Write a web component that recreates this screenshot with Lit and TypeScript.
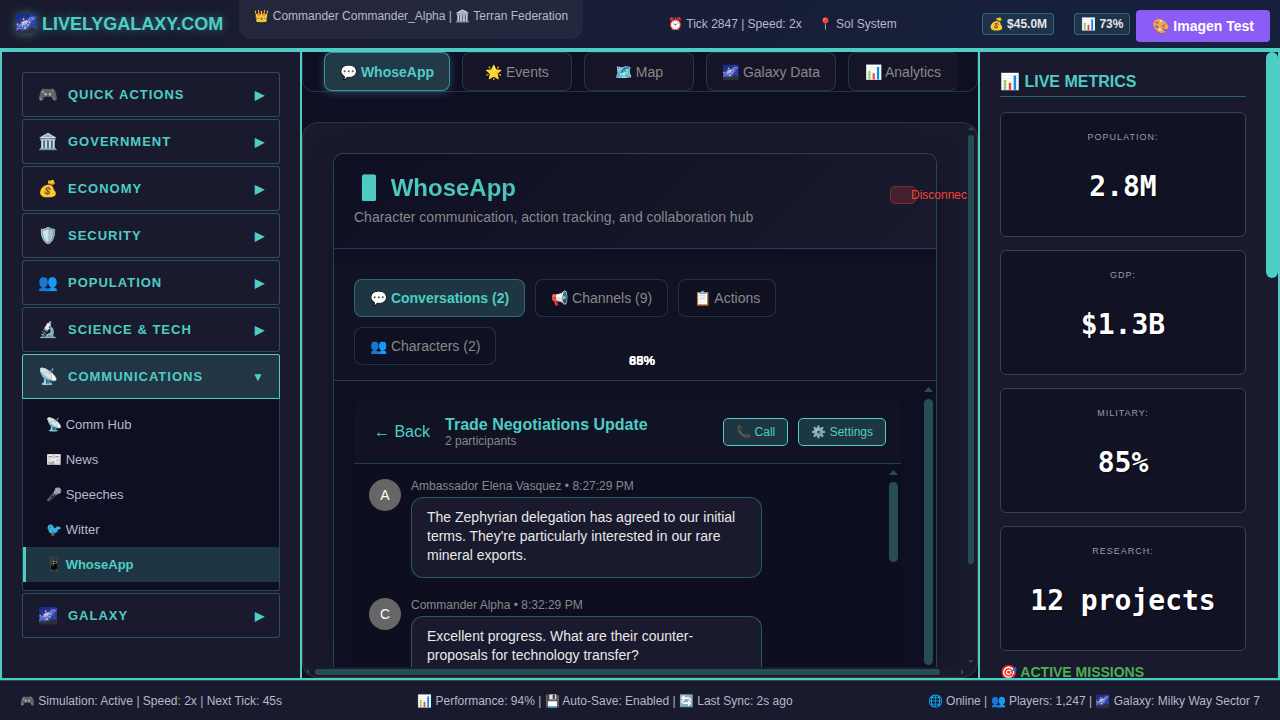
import { LitElement, html, css } from "lit";
import { customElement, state } from "lit/decorators.js";
import { classMap } from "lit/directives/class-map.js";

interface NavSection {
  icon: string;
  label: string;
  items?: { icon: string; label: string }[];
}

const SECTIONS: NavSection[] = [
  { icon: "🎮", label: "Quick Actions" },
  { icon: "🏛️", label: "Government" },
  { icon: "💰", label: "Economy" },
  { icon: "🛡️", label: "Security" },
  { icon: "👥", label: "Population" },
  { icon: "🔬", label: "Science & Tech" },
  {
    icon: "📡",
    label: "Communications",
    items: [
      { icon: "📡", label: "Comm Hub" },
      { icon: "📰", label: "News" },
      { icon: "🎤", label: "Speeches" },
      { icon: "🐦", label: "Witter" },
      { icon: "📱", label: "WhoseApp" },
    ],
  },
  { icon: "🌌", label: "Galaxy" },
];

const METRICS = [
  ["Population:", "2.8M"],
  ["GDP:", "$1.3B"],
  ["Military:", "85%"],
  ["Research:", "12 projects"],
];

const MESSAGES = [
  {
    initial: "A",
    meta: "Ambassador Elena Vasquez • 8:27:29 PM",
    text: "The Zephyrian delegation has agreed to our initial terms. They're particularly interested in our rare mineral exports.",
  },
  {
    initial: "C",
    meta: "Commander Alpha • 8:32:29 PM",
    text: "Excellent progress. What are their counter-proposals for technology transfer?",
  },
];

@customElement("galaxy-nav")
class GalaxyNav extends LitElement {
  @state() private open = "Communications";
  @state() private page = "WhoseApp";

  static styles = css`
    :host {
      display: block;
      overflow: hidden;
      background: #1a1a2e;
    }
    nav {
      display: flex;
      flex-direction: column;
      gap: 2px;
      padding: 20px;
    }
    button {
      font: inherit;
      cursor: pointer;
    }
    .section {
      display: flex;
      align-items: center;
      gap: 10px;
      width: 100%;
      height: 45px;
      padding: 0 15px;
      border: 1px solid rgba(78, 205, 196, 0.3);
      border-radius: 3px;
      background: #1a1a2e;
      color: #4ecdc4;
      font-size: 13px;
      font-weight: bold;
      letter-spacing: 1px;
      text-transform: uppercase;
      text-align: left;
    }
    .section.open {
      background: #223545;
      border-color: #4ecdc4;
      border-radius: 2px 2px 0 0;
    }
    .icon {
      width: 20px;
      font-size: 16px;
      letter-spacing: 0;
    }
    .name {
      flex: 1;
    }
    .arrow {
      font-size: 12px;
      letter-spacing: 0;
    }
    .sub {
      margin: 0;
      padding: 8px 0;
      list-style: none;
      background: #0f0f23;
      border: 1px solid rgba(78, 205, 196, 0.3);
      border-top: none;
      border-radius: 0 0 3px 3px;
    }
    .link {
      display: flex;
      align-items: center;
      height: 35px;
      padding-left: 20px;
      border-left: 3px solid transparent;
      color: #b8b8c8;
      font-size: 13px;
      text-decoration: none;
    }
    .link.current {
      background: #1e3643;
      border-color: #4ecdc4;
      color: #4ecdc4;
      font-weight: bold;
    }
  `;

  render() {
    return html`<nav aria-label="Departments">
      ${SECTIONS.map((s) => {
        const open = s.label === this.open;
        return html`<div>
          <button
            class=${classMap({ section: true, open })}
            aria-expanded=${open}
            @click=${() => (this.open = open ? "" : s.label)}
          >
            <span class="icon">${s.icon}</span><span class="name">${s.label}</span
            ><span class="arrow">${open ? "▼" : "▶"}</span>
          </button>
          ${open && s.items
            ? html`<ul class="sub">
                ${s.items.map(
                  (i) => html`<li>
                    <a
                      href="#"
                      class=${classMap({ link: true, current: i.label === this.page })}
                      @click=${(e: Event) => {
                        e.preventDefault();
                        this.page = i.label;
                      }}
                      >${i.icon} ${i.label}</a
                    >
                  </li>`
                )}
              </ul>`
            : ""}
        </div>`;
      })}
    </nav>`;
  }
}

@customElement("live-metrics")
class LiveMetrics extends LitElement {
  static styles = css`
    :host {
      display: grid;
      grid-template-columns: minmax(0, 1fr) 12px;
      overflow: hidden;
      background: #1a1a2e;
    }
    .body {
      min-height: 0;
      padding: 20px;
    }
    h2 {
      margin: 0 0 15px;
      padding-bottom: 5px;
      border-bottom: 1px solid rgba(78, 205, 196, 0.4);
      color: #4ecdc4;
      font-size: 16px;
      line-height: 19px;
    }
    .cards {
      display: grid;
      gap: 13px;
      margin: 0;
    }
    .card {
      display: flex;
      flex-direction: column;
      align-items: center;
      gap: 28px;
      padding: 18px 12px 33px;
      border: 1px solid #3d3d4d;
      border-radius: 6px;
      background: #121225;
    }
    dt {
      color: #9a9aaa;
      font-size: 9px;
      line-height: 12px;
      letter-spacing: 1px;
      text-transform: uppercase;
    }
    dd {
      margin: 0;
      color: #fff;
      font: bold 28px/32px "DejaVu Sans Mono", monospace;
      text-shadow: 1px 1px 2px rgba(0, 0, 0, 0.5);
    }
    h3 {
      margin: 13px 0 0;
      color: #4caf50;
      font-size: 14px;
      line-height: 16px;
    }
    .thumb {
      height: 226px;
      border-radius: 6px;
      background: #4ecdc4;
    }
  `;

  render() {
    return html`<div class="body">
        <h2>📊 LIVE METRICS</h2>
        <dl class="cards">
          ${METRICS.map(([k, v]) => html`<div class="card"><dt>${k}</dt><dd>${v}</dd></div>`)}
        </dl>
        <h3>🎯 ACTIVE MISSIONS</h3>
      </div>
      <div class="thumb"></div>`;
  }
}

@customElement("whose-app")
class WhoseApp extends LitElement {
  @state() private tab = 0;

  static styles = css`
    :host {
      display: block;
      min-height: 0;
    }
    .frame {
      display: grid;
      grid-template-columns: minmax(0, 1fr) 10px;
      grid-template-rows: minmax(0, 1fr) 10px;
      box-sizing: border-box;
      height: 100%;
      overflow: hidden;
      border: 1px solid rgba(255, 215, 0, 0.15);
      border-radius: 16px;
      background: #1a1a2e;
    }
    .view {
      display: flex;
      overflow: hidden;
      padding: 30px 30px 0;
    }
    .panel {
      display: flex;
      flex-direction: column;
      flex: 1;
      min-width: 0;
      border: 1px solid rgba(78, 205, 196, 0.3);
      border-bottom: none;
      border-radius: 10px 10px 0 0;
      background: #0f0f23;
      box-shadow: 0 8px 32px rgba(0, 0, 0, 0.3);
    }
    button {
      font: inherit;
      cursor: pointer;
    }
    .hero {
      display: flex;
      justify-content: space-between;
      padding: 17px 20px 22px;
      border-bottom: 1px solid rgba(78, 205, 196, 0.25);
      border-radius: 10px 10px 0 0;
      background: linear-gradient(135deg, #0f0f23, #1a1a2e);
    }
    h1 {
      margin: 0;
      background: linear-gradient(45deg, #4ecdc4, #45b7aa);
      background-clip: text;
      -webkit-background-clip: text;
      color: transparent;
      font-size: 24px;
      line-height: 34px;
    }
    .sub {
      margin: 4px 0 0;
      color: #888;
      font-size: 14px;
      line-height: 17px;
    }
    .status {
      box-sizing: border-box;
      width: 26px;
      height: 18px;
      margin-top: 15px;
      padding-left: 20px;
      border: 1px solid rgba(244, 67, 54, 0.3);
      border-radius: 5px;
      background: rgba(244, 67, 54, 0.2);
      color: #f44336;
      font-size: 12px;
      line-height: 16px;
      white-space: nowrap;
    }
    .tabs {
      position: relative;
      display: flex;
      flex-wrap: wrap;
      gap: 10px;
      margin-top: 15px;
      padding: 15px 150px 15px 20px;
      border-bottom: 1px solid rgba(78, 205, 196, 0.25);
      background: #121225;
    }
    .tab {
      height: 38px;
      padding: 0 15px;
      border: 1px solid rgba(78, 205, 196, 0.2);
      border-radius: 8px;
      background: #0f1022;
      color: #888;
      font-size: 14px;
    }
    .tab.active {
      background: #1e3643;
      border-color: rgba(78, 205, 196, 0.35);
      color: #4ecdc4;
      font-weight: bold;
    }
    .gauge {
      position: absolute;
      left: 308px;
      bottom: 12px;
      width: 0;
      display: flex;
      justify-content: center;
      color: #fff;
      font-size: 13px;
      font-weight: bold;
      line-height: 14px;
    }
    .scroller {
      display: grid;
      grid-template-columns: minmax(0, 1fr) 15px;
      flex: 1;
      min-height: 0;
    }
    .pane {
      display: flex;
      overflow: hidden;
      padding: 20px 20px 0;
    }
    .chat {
      display: flex;
      flex-direction: column;
      flex: 1;
      min-width: 0;
      border-radius: 8px 8px 0 0;
      background: #0e0e21;
    }
    .chat-head {
      display: flex;
      align-items: center;
      gap: 10px;
      height: 62px;
      flex: none;
      padding: 0 15px 0 20px;
      border-bottom: 1px solid rgba(78, 205, 196, 0.25);
      border-radius: 8px 8px 0 0;
      background: #121225;
    }
    .back {
      padding: 0;
      margin-right: 5px;
      border: none;
      background: none;
      color: #4ecdc4;
      font-size: 16px;
    }
    .topic {
      flex: 1;
    }
    h2 {
      margin: 0;
      color: #4ecdc4;
      font-size: 16px;
      line-height: 18px;
    }
    .topic p {
      margin: 0;
      color: #888;
      font-size: 12px;
      line-height: 14px;
    }
    .act {
      height: 28px;
      padding: 0 12px;
      border: 1px solid #4ecdc4;
      border-radius: 5px;
      background: #1e3643;
      color: #4ecdc4;
      font-size: 12px;
    }
    .log {
      display: grid;
      grid-template-columns: minmax(0, 1fr) 15px;
      min-height: 0;
      flex: 1;
    }
    .messages {
      display: flex;
      flex-direction: column;
      gap: 20px;
      overflow: hidden;
      padding: 15px;
    }
    .message {
      display: flex;
      flex: none;
      gap: 10px;
    }
    .avatar {
      display: flex;
      align-items: center;
      justify-content: center;
      flex: none;
      width: 32px;
      height: 32px;
      border-radius: 50%;
      background: #666;
      color: #fff;
      font-size: 14px;
    }
    .content {
      width: 70%;
    }
    .meta {
      margin-bottom: 4px;
      color: #888;
      font-size: 12px;
      line-height: 14px;
    }
    .bubble {
      padding: 10px 15px 12px;
      border: 1px solid rgba(78, 205, 196, 0.35);
      border-radius: 12px;
      background: #1a1a2e;
      color: #e8e8e8;
      font-size: 14px;
      line-height: 19px;
    }
    .rail {
      display: flex;
      flex-direction: column;
      align-items: center;
      gap: 7px;
      padding-top: 6px;
    }
    .rail.slim {
      align-items: flex-start;
      gap: 5px;
      padding: 4px 1px;
    }
    .up,
    .down {
      width: 9px;
      height: 5px;
      background: #264d56;
      clip-path: polygon(50% 0, 100% 100%, 0 100%);
    }
    .slim .up,
    .slim .down {
      width: 6px;
      height: 3px;
    }
    .down {
      margin-top: auto;
      transform: rotate(180deg);
    }
    .bar {
      width: 9px;
      border-radius: 5px;
      background: #264d56;
    }
    .bar.whole {
      flex: 1;
      margin-bottom: 2px;
    }
    .bar.part {
      height: 80px;
    }
    .slim .bar {
      width: 6px;
      height: 80%;
    }
    .cross {
      display: flex;
      align-items: center;
      gap: 6px;
      padding: 0 3px;
    }
    .cross .tip {
      width: 3px;
      height: 6px;
      background: #264d56;
      clip-path: polygon(0 50%, 100% 0, 100% 100%);
    }
    .cross .tip:last-child {
      margin-left: auto;
      transform: rotate(180deg);
    }
    .cross .bar {
      width: 95%;
      height: 6px;
    }
  `;

  render() {
    const tabs = ["💬 Conversations (2)", "📢 Channels (9)", "📋 Actions", "👥 Characters (2)"];
    return html`<div class="frame">
      <div class="view">
        <section class="panel">
          <header class="hero">
            <div>
              <h1>📱 WhoseApp</h1>
              <p class="sub">Character communication, action tracking, and collaboration hub</p>
            </div>
            <div class="status">Disconnected</div>
          </header>
          <div class="tabs">
            ${tabs.map(
              (t, i) =>
                html`<button
                  class=${classMap({ tab: true, active: i === this.tab })}
                  @click=${() => (this.tab = i)}
                >
                  ${t}
                </button>`
            )}
            <div class="gauge">85%</div>
            <div class="gauge">68%</div>
          </div>
          <div class="scroller">
            <div class="pane">
              <div class="chat">
                <div class="chat-head">
                  <button class="back">← Back</button>
                  <div class="topic">
                    <h2>Trade Negotiations Update</h2>
                    <p>2 participants</p>
                  </div>
                  <button class="act">📞 Call</button>
                  <button class="act">⚙️ Settings</button>
                </div>
                <div class="log">
                  <div class="messages">
                    ${MESSAGES.map(
                      (m) => html`<article class="message">
                        <div class="avatar">${m.initial}</div>
                        <div class="content">
                          <div class="meta">${m.meta}</div>
                          <div class="bubble">${m.text}</div>
                        </div>
                      </article>`
                    )}
                  </div>
                  <div class="rail"><i class="up"></i><i class="bar part"></i></div>
                </div>
              </div>
            </div>
            <div class="rail"><i class="up"></i><i class="bar whole"></i></div>
          </div>
        </section>
      </div>
      <div class="rail slim"><i class="up"></i><i class="bar"></i><i class="down"></i></div>
      <div class="cross"><i class="tip"></i><i class="bar"></i><i class="tip"></i></div>
    </div>`;
  }
}

@customElement("app-root")
class AppRoot extends LitElement {
  @state() private view = 0;

  static styles = css`
    :host {
      display: grid;
      grid-template-rows: 50px minmax(0, 1fr) 40px;
      height: 100vh;
      overflow: hidden;
      background: #0f0f23;
      color: #b8b8c8;
      font: 12px "Liberation Sans", Arial, sans-serif;
    }
    button {
      font: inherit;
      cursor: pointer;
    }
    .top {
      display: flex;
      align-items: center;
      justify-content: space-between;
      padding: 0 10px 0 15px;
      border-bottom: 2px solid #4ecdc4;
      background: linear-gradient(135deg, #1a1a2e, #16213e);
    }
    .brand {
      display: flex;
      align-self: stretch;
      align-items: center;
      gap: 16px;
    }
    .logo {
      color: #4ecdc4;
      font-size: 18px;
      font-weight: bold;
      text-shadow: 0 0 10px rgba(78, 205, 196, 0.5);
      white-space: nowrap;
    }
    .who {
      align-self: flex-start;
      padding: 9px 15px 16px;
      border-radius: 0 0 12px 12px;
      background: rgba(255, 255, 255, 0.05);
      line-height: 14px;
      white-space: nowrap;
    }
    .clock,
    .stats {
      display: flex;
      align-items: center;
      gap: 16px;
      white-space: nowrap;
    }
    .stats {
      gap: 20px;
    }
    .end {
      display: flex;
      align-items: center;
      gap: 6px;
    }
    .badge {
      padding: 3px 6px;
      border: 1px solid rgba(78, 205, 196, 0.35);
      border-radius: 4px;
      background: #1e3349;
      color: #e4e6ea;
      font-weight: bold;
      line-height: 14px;
    }
    .imagen {
      height: 32px;
      margin-top: 4px;
      padding: 0 16px;
      border: none;
      border-radius: 4px;
      background: #8b5cf6;
      color: #fff;
      font-size: 14px;
      font-weight: bold;
      white-space: nowrap;
    }
    .main {
      display: grid;
      grid-template-columns: 298px minmax(0, 1fr) 298px;
      grid-template-rows: minmax(0, 1fr);
      gap: 2px;
      padding: 2px;
      background: #4ecdc4;
    }
    .center {
      display: grid;
      grid-template-columns: minmax(0, 1fr);
      grid-template-rows: auto minmax(0, 1fr);
      gap: 30px;
      overflow: hidden;
      background: #0f0f23;
    }
    .views {
      display: flex;
      gap: 12px;
      padding: 0 10px 0 21px;
      border: 1px solid rgba(78, 205, 196, 0.2);
      border-top: none;
      border-radius: 0 0 12px 12px;
    }
    .view {
      height: 39px;
      min-width: 110px;
      padding: 0 15px;
      border: 1px solid rgba(78, 205, 196, 0.2);
      border-radius: 8px;
      background: #151527;
      color: #888;
      font-size: 14px;
      white-space: nowrap;
    }
    .view.active {
      background: #223a48;
      border-color: rgba(78, 205, 196, 0.6);
      color: #4ecdc4;
      font-weight: bold;
      box-shadow: 0 2px 8px rgba(78, 160, 205, 0.35);
    }
    .view:last-child {
      border-right-color: transparent;
    }
    .bottom {
      display: flex;
      align-items: center;
      justify-content: space-between;
      padding: 0 20px;
      border-top: 1px solid rgba(78, 205, 196, 0.3);
      background: #1a1a2e;
      white-space: nowrap;
    }
  `;

  render() {
    const views = ["💬 WhoseApp", "🌟 Events", "🗺️ Map", "🌌 Galaxy Data", "📊 Analytics"];
    return html`
      <header class="top">
        <div class="brand">
          <div class="logo">🌌 LIVELYGALAXY.COM</div>
          <div class="who">👑 Commander Commander_Alpha | 🏛️ Terran Federation</div>
        </div>
        <div class="clock"><span>⏰ Tick 2847 | Speed: 2x</span><span>📍 Sol System</span></div>
        <div class="end">
          <div class="stats">
            <span class="badge">💰 $45.0M</span><span class="badge">📊 73%</span>
          </div>
          <button class="imagen">🎨 Imagen Test</button>
        </div>
      </header>
      <main class="main">
        <galaxy-nav></galaxy-nav>
        <div class="center">
          <div class="views">
            ${views.map(
              (v, i) =>
                html`<button
                  class=${classMap({ view: true, active: i === this.view })}
                  @click=${() => (this.view = i)}
                >
                  ${v}
                </button>`
            )}
          </div>
          <whose-app></whose-app>
        </div>
        <live-metrics></live-metrics>
      </main>
      <footer class="bottom">
        <span>🎮 Simulation: Active | Speed: 2x | Next Tick: 45s</span>
        <span>📊 Performance: 94% | 💾 Auto-Save: Enabled | 🔄 Last Sync: 2s ago</span>
        <span>🌐 Online | 👥 Players: 1,247 | 🌌 Galaxy: Milky Way Sector 7</span>
      </footer>
    `;
  }
}
